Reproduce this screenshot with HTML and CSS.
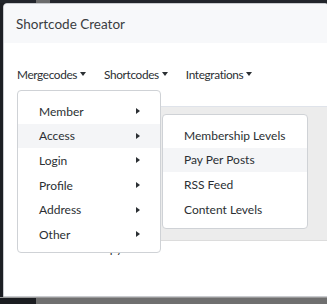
FILE: index.html
```html
<!DOCTYPE html>
<html lang="en">
<head>
  <meta charset="UTF-8">
  <title>Shortcode Creator</title>
  <link rel="stylesheet" href="styles.css">
</head>
<body>

  <div class="backdrop-top">
    <span class="tab"></span>
  </div>

  <div class="modal">
    <div class="modal-header">Shortcode Creator</div>

    <div class="modal-body">
      <div class="nav">
        <span class="nav-item">Mergecodes <i class="caret-down"></i></span>
        <span class="nav-item">Shortcodes <i class="caret-down"></i></span>
        <span class="nav-item">Integrations <i class="caret-down"></i></span>
      </div>

      <div class="workspace"></div>

      <div class="actions">
        <span class="copy">Copy</span>
      </div>

      <ul class="menu" id="mergeMenu">
        <li>Member <i class="caret-right"></i></li>
        <li class="active">Access <i class="caret-right"></i></li>
        <li>Login <i class="caret-right"></i></li>
        <li>Profile <i class="caret-right"></i></li>
        <li>Address <i class="caret-right"></i></li>
        <li>Other <i class="caret-right"></i></li>
      </ul>

      <ul class="menu submenu" id="accessMenu">
        <li>Membership Levels</li>
        <li class="active">Pay Per Posts</li>
        <li>RSS Feed</li>
        <li>Content Levels</li>
      </ul>
    </div>
  </div>

  <div class="backdrop-bottom">
    <span class="dark"></span>
  </div>

</body>
</html>
```

FILE: styles.css
```css
body {
  margin: 0;
  width: 327px;
  height: 304px;
  overflow: hidden;
  background: #1d1f24;
  font-family: Lato, 'Liberation Sans', sans-serif;
  color: #2b2f33;
}

.backdrop-top {
  height: 3px;
  background: #22252b;
  display: flex;
}

.backdrop-top .tab {
  margin-left: 36px;
  width: 14px;
  background: #6c6c6c;
}

.modal {
  margin-left: 3px;
  width: 326px;
  height: 294px;
  background: #fff;
  border: 1px solid #c9cbcf;
  border-radius: 4px 4px 0 0;
  box-sizing: border-box;
  overflow: hidden;
}

.modal-header {
  height: 39px;
  background: #f7f8fa;
  padding-left: 12px;
  display: flex;
  align-items: center;
  box-sizing: border-box;
  font-size: 13.5px;
  color: #3a3d41;
}

.modal-body {
  position: relative;
  padding: 22px 0 0 13px;
}

.nav {
  display: flex;
  gap: 18px;
  font-size: 11.8px;
  letter-spacing: -0.35px;
  height: 18px;
  align-items: center;
  white-space: nowrap;
}

.nav-item {
  display: flex;
  align-items: center;
  gap: 3px;
}

.caret-down {
  width: 0;
  height: 0;
  border-left: 3.5px solid transparent;
  border-right: 3.5px solid transparent;
  border-top: 4px solid #2b2f33;
}

.caret-right {
  width: 0;
  height: 0;
  border-top: 3.5px solid transparent;
  border-bottom: 3.5px solid transparent;
  border-left: 4px solid #2b2f33;
}

.workspace {
  margin-top: 23px;
  height: 133px;
  background: #ececec;
  border-top: 1px solid #dfe3ea;
  border-bottom: 1px solid #dcdcdc;
}

.actions {
  padding: 0 0 0 78px;
  font-size: 12px;
}

.menu {
  position: absolute;
  margin: 0;
  padding: 8px 0;
  list-style: none;
  background: #fff;
  border: 1px solid #cfd2d6;
  border-radius: 4px;
  font-size: 12px;
  white-space: nowrap;
  box-sizing: border-box;
}

.menu li {
  height: 24.6px;
  display: flex;
  align-items: center;
  justify-content: space-between;
  padding: 0 20px 0 21px;
}

.menu li.active {
  background: #f4f5f7;
}

#mergeMenu {
  left: 13px;
  top: 47px;
  width: 144px;
  height: 163px;
  z-index: 2;
}

.submenu {
  left: 158px;
  top: 71px;
  width: 146px;
  height: 115px;
  z-index: 3;
}

.backdrop-bottom {
  height: 7px;
  background: #6f6f6f;
  border-top: 1px solid #9a9a9a;
  display: flex;
}

.backdrop-bottom .dark {
  width: 36px;
  background: #1b1d21;
}
```
